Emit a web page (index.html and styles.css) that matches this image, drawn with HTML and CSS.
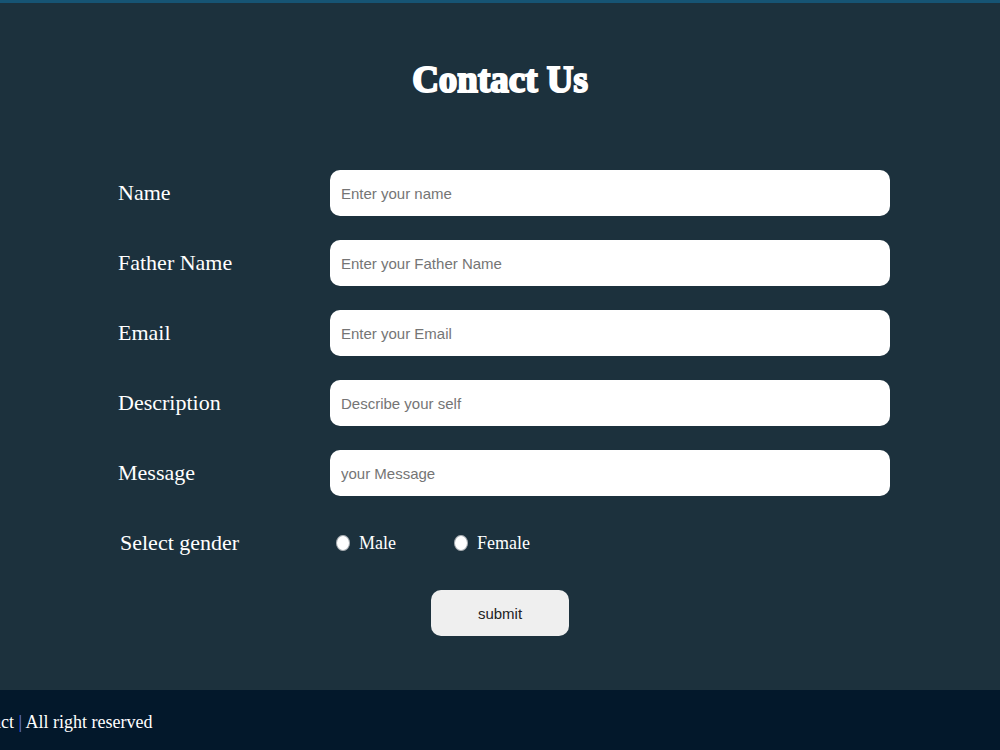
FILE: index.html
```html
<!DOCTYPE html>
<html lang="en">
<head>
  <meta charset="UTF-8" />
  <meta name="viewport" content="width=device-width, initial-scale=1.0"/>
  <title>Contact Us</title>
  <link rel="stylesheet" href="styles.css">
</head>
<body>
<main class="contact">
  <h1>Contact Us</h1>
  <form>
    <div class="field">
      <label for="name">Name</label>
      <input type="text" id="name" placeholder="Enter your name"/>
    </div>
    <div class="field">
      <label for="father">Father Name</label>
      <input type="text" id="father" placeholder="Enter your Father Name"/>
    </div>
    <div class="field">
      <label for="email">Email</label>
      <input type="email" id="email" placeholder="Enter your Email"/>
    </div>
    <div class="field">
      <label for="description">Description</label>
      <input type="text" id="description" placeholder="Describe your self"/>
    </div>
    <div class="field">
      <label for="message">Message</label>
      <input type="text" id="message" placeholder="your Message"/>
    </div>
    <div class="field gender" role="radiogroup" aria-labelledby="genderLabel">
      <span class="gender-label" id="genderLabel">Select gender</span>
      <div class="options">
        <label><input type="radio" name="gender" value="male"/>Male</label>
        <label><input type="radio" name="gender" value="female"/>Female</label>
      </div>
    </div>
    <button type="submit">submit</button>
  </form>
</main>
<footer>
  <p>Contact <span class="bar">|</span> All right reserved</p>
</footer>
</body>
</html>
```
FILE: styles.css
```css
* { box-sizing: border-box; margin: 0; padding: 0; }
body {
  font-family: "Liberation Serif", "Times New Roman", serif;
  background: #03182b;
  color: #fff;
  overflow-x: hidden;
}

.contact {
  background: #1c313d;
  border-top: 3px solid #165474;
  padding: 55px 11% 54px;
}

h1 {
  text-align: center;
  font-size: 37px;
  line-height: 44px;
  margin-bottom: 68px;
  -webkit-text-stroke: 2px #fff;
}

form {
  display: flex;
  flex-direction: column;
  gap: 24px;
}

.field {
  display: grid;
  grid-template-columns: 212px 1fr;
  align-items: center;
  min-height: 46px;
  padding-left: 8px;
  font-size: 22px;
}

.field input[type="text"],
.field input[type="email"] {
  width: 100%;
  height: 46px;
  padding: 0 11px;
  font-family: "Liberation Sans", Arial, sans-serif;
  font-size: 15px;
  border: none;
  border-radius: 10px;
  background: #fff;
}

.field input::placeholder {
  color: #757575;
}

.gender-label {
  padding-left: 2px;
}

.options {
  display: flex;
  gap: 58px;
  padding-left: 6px;
  font-size: 18px;
}

.options label {
  display: flex;
  align-items: center;
  gap: 9px;
}

.options input {
  appearance: none;
  width: 14px;
  height: 16px;
  border: 1px solid #a5abb0;
  border-radius: 50%;
  background: #fff;
}

.options input:checked {
  border: 4px solid #0075ff;
}

button {
  align-self: center;
  width: 138px;
  height: 46px;
  font-family: "Liberation Sans", Arial, sans-serif;
  font-size: 15px;
  color: #222;
  background: #efefef;
  border: none;
  border-radius: 10px;
  cursor: pointer;
}

footer {
  background: #03182b;
  padding: 22px 0;
}

footer p {
  margin-left: -42px;
  font-size: 18px;
  white-space: nowrap;
}

.bar {
  color: #6a7cf0;
}
```
